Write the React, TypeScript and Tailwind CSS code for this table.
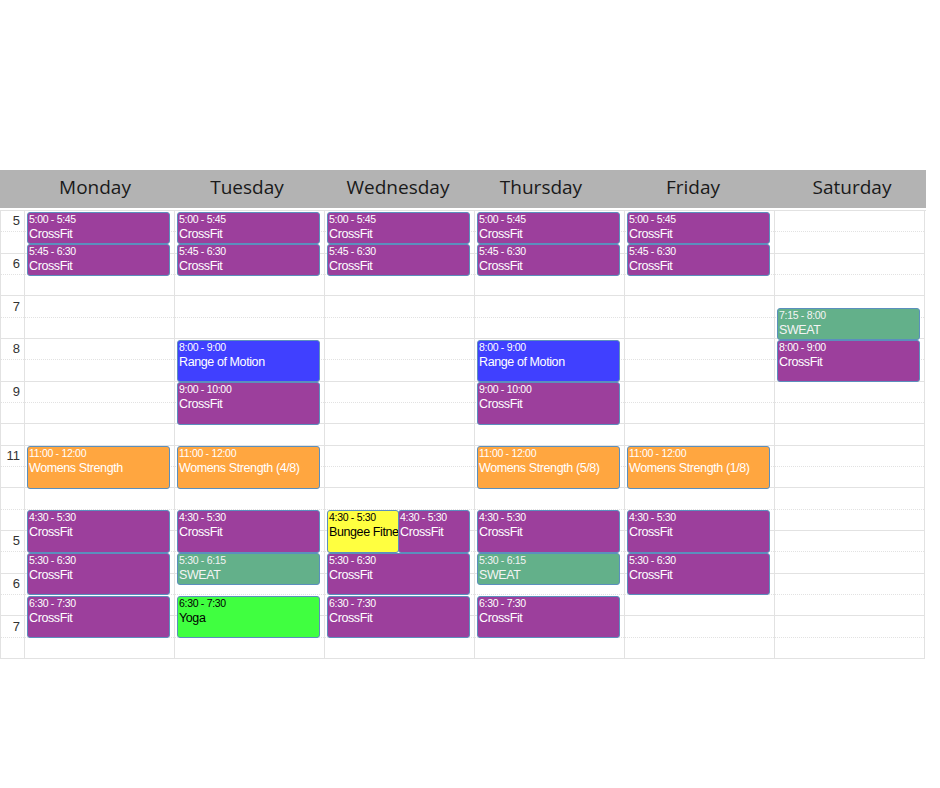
import React from "react";

type Ev = {
    day: number;
    start: number;
    end: number;
    time: string;
    title: string;
    color: string;
    half?: "left" | "right";
};

const ROWS = 21;
const ROW_H = 448 / ROWS;

// half-hour slot indexes: 0 = 5:00am ... 10 = 10:00, 11 = 11:00, 13 = 12:00, 14 = 4:30pm
const SOLID = [2, 4, 6, 8, 10, 11, 13, 15, 17, 19, 21];

const labels: Record<number, string> = {
    0: "5",
    2: "6",
    4: "7",
    6: "8",
    8: "9",
    11: "11",
    15: "5",
    17: "6",
    19: "7",
};

const days = [
    { name: "Monday", shift: "pr-[10px]" },
    { name: "Tuesday", shift: "pr-[6px]" },
    { name: "Wednesday", shift: "pr-[4px]" },
    { name: "Thursday", shift: "pr-[18px]" },
    { name: "Friday", shift: "pr-[14px]" },
    { name: "Saturday", shift: "pl-[4px]" },
];

const PURPLE = "bg-[#9c3f9c] text-white";
const BLUE = "bg-[#4040ff] text-white";
const ORANGE = "bg-[#ffa640] text-white";
const SWEAT = "bg-[#63b08a] text-[#f4f4f4]";
const YOGA = "bg-[#40ff40] text-black";
const YELLOW = "bg-[#ffff40] text-black";

const events: Ev[] = [
    // Monday
    { day: 0, start: 0, end: 1.5, time: "5:00 - 5:45", title: "CrossFit", color: PURPLE },
    { day: 0, start: 1.5, end: 3, time: "5:45 - 6:30", title: "CrossFit", color: PURPLE },
    { day: 0, start: 11, end: 13, time: "11:00 - 12:00", title: "Womens Strength", color: ORANGE },
    { day: 0, start: 14, end: 16, time: "4:30 - 5:30", title: "CrossFit", color: PURPLE },
    { day: 0, start: 16, end: 18, time: "5:30 - 6:30", title: "CrossFit", color: PURPLE },
    { day: 0, start: 18, end: 20, time: "6:30 - 7:30", title: "CrossFit", color: PURPLE },
    // Tuesday
    { day: 1, start: 0, end: 1.5, time: "5:00 - 5:45", title: "CrossFit", color: PURPLE },
    { day: 1, start: 1.5, end: 3, time: "5:45 - 6:30", title: "CrossFit", color: PURPLE },
    { day: 1, start: 6, end: 8, time: "8:00 - 9:00", title: "Range of Motion", color: BLUE },
    { day: 1, start: 8, end: 10, time: "9:00 - 10:00", title: "CrossFit", color: PURPLE },
    { day: 1, start: 11, end: 13, time: "11:00 - 12:00", title: "Womens Strength (4/8)", color: ORANGE },
    { day: 1, start: 14, end: 16, time: "4:30 - 5:30", title: "CrossFit", color: PURPLE },
    { day: 1, start: 16, end: 17.5, time: "5:30 - 6:15", title: "SWEAT", color: SWEAT },
    { day: 1, start: 18, end: 20, time: "6:30 - 7:30", title: "Yoga", color: YOGA },
    // Wednesday
    { day: 2, start: 0, end: 1.5, time: "5:00 - 5:45", title: "CrossFit", color: PURPLE },
    { day: 2, start: 1.5, end: 3, time: "5:45 - 6:30", title: "CrossFit", color: PURPLE },
    { day: 2, start: 14, end: 16, time: "4:30 - 5:30", title: "Bungee Fitness", color: YELLOW, half: "left" },
    { day: 2, start: 14, end: 16, time: "4:30 - 5:30", title: "CrossFit", color: PURPLE, half: "right" },
    { day: 2, start: 16, end: 18, time: "5:30 - 6:30", title: "CrossFit", color: PURPLE },
    { day: 2, start: 18, end: 20, time: "6:30 - 7:30", title: "CrossFit", color: PURPLE },
    // Thursday
    { day: 3, start: 0, end: 1.5, time: "5:00 - 5:45", title: "CrossFit", color: PURPLE },
    { day: 3, start: 1.5, end: 3, time: "5:45 - 6:30", title: "CrossFit", color: PURPLE },
    { day: 3, start: 6, end: 8, time: "8:00 - 9:00", title: "Range of Motion", color: BLUE },
    { day: 3, start: 8, end: 10, time: "9:00 - 10:00", title: "CrossFit", color: PURPLE },
    { day: 3, start: 11, end: 13, time: "11:00 - 12:00", title: "Womens Strength (5/8)", color: ORANGE },
    { day: 3, start: 14, end: 16, time: "4:30 - 5:30", title: "CrossFit", color: PURPLE },
    { day: 3, start: 16, end: 17.5, time: "5:30 - 6:15", title: "SWEAT", color: SWEAT },
    { day: 3, start: 18, end: 20, time: "6:30 - 7:30", title: "CrossFit", color: PURPLE },
    // Friday
    { day: 4, start: 0, end: 1.5, time: "5:00 - 5:45", title: "CrossFit", color: PURPLE },
    { day: 4, start: 1.5, end: 3, time: "5:45 - 6:30", title: "CrossFit", color: PURPLE },
    { day: 4, start: 11, end: 13, time: "11:00 - 12:00", title: "Womens Strength (1/8)", color: ORANGE },
    { day: 4, start: 14, end: 16, time: "4:30 - 5:30", title: "CrossFit", color: PURPLE },
    { day: 4, start: 16, end: 18, time: "5:30 - 6:30", title: "CrossFit", color: PURPLE },
    // Saturday
    { day: 5, start: 4.5, end: 6, time: "7:15 - 8:00", title: "SWEAT", color: SWEAT },
    { day: 5, start: 6, end: 8, time: "8:00 - 9:00", title: "CrossFit", color: PURPLE },
];

function rowLine(i: number) {
    return SOLID.includes(i + 1)
        ? "border-b border-solid border-[#e2e2e2]"
        : "border-b border-dotted border-[#e2e2e2]";
}

function EventBox({ ev }: { ev: Ev }) {
    const side =
        ev.half === "left"
            ? "left-[2px] w-[72px]"
            : ev.half === "right"
                ? "left-[73px] right-[4px]"
                : "left-[2px] right-[4px]";
    return (
        <div
            className={`absolute ${side} ${ev.color} overflow-hidden whitespace-nowrap rounded-[3px] border border-[#5b8fbd] pl-px`}
            style={{ top: ev.start * ROW_H + 0.5, height: (ev.end - ev.start) * ROW_H }}
        >
            <div className="text-[10.5px] leading-[12px] tracking-[-0.3px]">{ev.time}</div>
            <div className="mt-[2px] text-[12.5px] leading-[15px] tracking-[-0.4px]">{ev.title}</div>
        </div>
    );
}

export default function App() {
    return (
        <div className="min-h-[788px] bg-white pt-[170px] font-['Liberation_Sans',Arial,sans-serif]">
            <div className="flex h-[38px] w-[926px] bg-[#b3b3b3] pb-[3px] font-['Open_Sans',sans-serif] text-[19px] text-[#1a1a1a]">
                <div className="w-[25px]" />
                {days.map((d) => (
                    <div key={d.name} className={`flex w-[150px] items-center justify-center ${d.shift}`}>
                        {d.name}
                    </div>
                ))}
            </div>
            <div className="mt-[2px] flex w-[926px] border-t border-[#e2e2e2]">
                <div className="grid h-[448px] w-[25px] grid-rows-[repeat(21,minmax(0,1fr))] border-r border-l border-[#e2e2e2]">
                    {Array.from({ length: ROWS }).map((_, i) => (
                        <div
                            key={i}
                            className={`flex items-center justify-end pr-[4px] text-[13px] text-[#333] ${rowLine(i)}`}
                        >
                            {labels[i] ?? ""}
                        </div>
                    ))}
                </div>
                {days.map((d, di) => (
                    <div key={d.name} className="relative h-[448px] w-[150px] border-r border-[#e2e2e2]">
                        <div className="grid h-full grid-rows-[repeat(21,minmax(0,1fr))]">
                            {Array.from({ length: ROWS }).map((_, i) => (
                                <div key={i} className={rowLine(i)} />
                            ))}
                        </div>
                        {events
                            .filter((e) => e.day === di)
                            .map((e, k) => (
                                <EventBox key={k} ev={e} />
                            ))}
                    </div>
                ))}
            </div>
        </div>
    );
}
